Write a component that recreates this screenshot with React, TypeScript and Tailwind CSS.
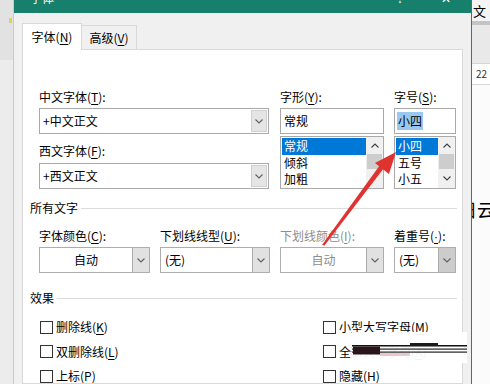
import React from "react";

const Chevron = ({ up = false, color = "#606060" }: { up?: boolean; color?: string }) => (
  <svg width="8" height="5" viewBox="0 0 8 5" className="block">
    <path d={up ? "M0.5 4.5 L4 1 L7.5 4.5" : "M0.5 0.5 L4 4 L7.5 0.5"} fill="none" stroke={color} strokeWidth="1.1" />
  </svg>
);

const Key = ({ k }: { k: string }) => (
  <>
    (<span className="underline underline-offset-[2px]">{k}</span>)
  </>
);

const Label = ({ text, k, colon = true, disabled = false }: { text: string; k: React.ReactNode; colon?: boolean; disabled?: boolean }) => (
  <div className={`h-4 leading-4 text-[12px] whitespace-nowrap ${disabled ? "text-[#8d8d8d]" : "text-black"}`}>
    {text}
    (<span className="underline underline-offset-[2px]">{k}</span>)
    {colon ? ":" : ""}
  </div>
);

const InputCombo = ({ value }: { value: string }) => (
  <div className="h-[26px] w-full border border-[#a9a9a9] bg-white flex items-center">
    <div className="flex-1 pl-[3px] text-[12px] leading-4 text-black">{value}</div>
    <div className="w-[16px] h-[22px] mr-[1px] bg-[#e5e5e5] border border-[#d0d0d0] flex items-center justify-center">
      <Chevron />
    </div>
  </div>
);

const Combo = ({ value, center = false, disabled = false, dark = false }: { value: string; center?: boolean; disabled?: boolean; dark?: boolean }) => (
  <div className="h-[26px] w-full border border-[#adadad] bg-white flex items-stretch">
    <div
      className={`flex-1 flex items-center text-[12px] leading-4 ${center ? "justify-center" : "pl-[4px]"} ${
        disabled ? "text-[#8d8d8d]" : "text-black"
      }`}
    >
      {value}
    </div>
    <div className={`w-[17px] border-l border-[#adadad] flex items-center justify-center ${dark ? "bg-[#cccccc]" : "bg-[#e1e1e1]"}`}>
      <Chevron />
    </div>
  </div>
);

const ListBox = ({ items, down = false }: { items: string[]; down?: boolean }) => (
  <div className="h-[53px] w-full border border-[#a9a9a9] bg-white flex">
    <div className="flex-1 pt-[1px] pl-[1px]">
      {items.map((it, i) => (
        <div
          key={i}
          className={`h-[16.5px] leading-[16px] text-[12px] pl-[2px] ${i === 0 ? "bg-[#0078d7] text-white" : "text-black"}`}
        >
          {it}
        </div>
      ))}
    </div>
    <div className="w-[17px] bg-[#f0f0f0] flex flex-col items-center">
      <div className="h-[17px] flex items-center justify-center">
        <Chevron up color="#404040" />
      </div>
      <div className="w-[15px] h-[15px] bg-[#cdcdcd]" />
      <div className="flex-1 flex items-center justify-center">{down ? <Chevron color="#404040" /> : null}</div>
    </div>
  </div>
);

const Check = ({ text, k }: { text: string; k: string }) => (
  <div className="flex items-center h-full">
    <div className="w-[13px] h-[13px] border border-[#333333] bg-white shrink-0" />
    <div className="ml-[3px] text-[12px] leading-4 text-black whitespace-nowrap">
      {text}
      <Key k={k} />
    </div>
  </div>
);

const GroupHeader = ({ text }: { text: string }) => (
  <div className="flex items-center h-4 pl-[7px] pr-[5px]">
    <div className="text-[12px] leading-4 text-black whitespace-nowrap">{text}</div>
    <div className="flex-1 h-px bg-[#dcdcdc] ml-[3px]" />
  </div>
);

export default function App() {
  return (
    <div className="relative w-[490px] h-[384px] overflow-hidden flex bg-white font-['Noto_Sans_CJK_SC','Microsoft_YaHei',sans-serif]">
      {/* left strip */}
      <div className="w-[14px] shrink-0 h-full flex flex-col bg-[#ececec] border-r border-[#c9c9c9]">
        <div className="h-[60px] shrink-0 bg-[#e2e2e2] flex flex-col items-end">
          <div className="mt-[18px] mr-[1px] w-[3px] h-[5px] bg-[#d8d060]" />
        </div>
      </div>

      {/* dialog */}
      <div className="w-[458px] shrink-0 h-full flex flex-col bg-[#f0f0f0] border-r border-[#2f7f70] overflow-hidden">
        <div className="h-[13px] shrink-0 bg-[#17806d] flex items-start overflow-hidden text-white text-[12px]">
          <div className="ml-[16px] -mt-[10px] leading-4">字体</div>
          <div className="flex-1" />
          <div className="-mt-[10px] mr-[38px] leading-4">?</div>
          <div className="-mt-[10px] mr-[20px] leading-4">✕</div>
        </div>

        <div className="flex-1 min-h-0 flex flex-col pl-[8px] pr-[8px] pt-[10px]">
          {/* tabs */}
          <div className="h-[26px] shrink-0 flex items-end">
            <div className="relative z-10 h-[27px] -mb-px w-[60px] bg-white border border-b-0 border-[#d9d9d9] flex items-center justify-center text-[12px] text-black leading-4">
              字体<Key k="N" />
            </div>
            <div className="h-[24px] w-[55px] bg-[#f0f0f0] border border-l-0 border-b-0 border-[#d9d9d9] flex items-center justify-center text-[12px] text-black leading-4">
              高级<Key k="V" />
            </div>
          </div>

          {/* panel */}
          <div className="flex-1 min-h-0 overflow-hidden bg-white border border-[#d9d9d9] flex flex-col pt-[39px]">
            {/* top section */}
            <div className="flex shrink-0 pl-[16px]">
              <div className="w-[230px] flex flex-col">
                <Label text="中文字体" k="T" />
                <div className="mt-[3px]">
                  <InputCombo value="+中文正文" />
                </div>
                <div className="mt-[9px]">
                  <Label text="西文字体" k="F" />
                </div>
                <div className="mt-[4px]">
                  <InputCombo value="+西文正文" />
                </div>
              </div>
              <div className="w-[104px] ml-[11px] flex flex-col">
                <Label text="字形" k="Y" />
                <div className="mt-[3px] h-[26px] border border-[#a9a9a9] bg-white flex items-center pl-[3px] text-[12px] leading-4 text-black">
                  常规
                </div>
                <div className="mt-[2px]">
                  <ListBox items={["常规", "倾斜", "加粗"]} />
                </div>
              </div>
              <div className="w-[62px] ml-[10px] flex flex-col">
                <Label text="字号" k="S" />
                <div className="mt-[3px] h-[26px] border border-[#a9a9a9] bg-white flex items-center pl-[2px] text-[12px] leading-4 text-black">
                  <span className="bg-[#99c9ef] px-[1px] leading-[18px]">小四</span>
                </div>
                <div className="mt-[2px]">
                  <ListBox items={["小四", "五号", "小五"]} down />
                </div>
              </div>
            </div>

            {/* all text */}
            <div className="mt-[11px] shrink-0">
              <GroupHeader text="所有文字" />
            </div>
            <div className="mt-[12px] shrink-0 flex pl-[16px]">
              <div className="w-[111px]">
                <Label text="字体颜色" k="C" />
                <div className="mt-[3px]">
                  <Combo value="自动" center />
                </div>
              </div>
              <div className="w-[110px] ml-[10px]">
                <Label text="下划线线型" k="U" />
                <div className="mt-[3px]">
                  <Combo value="(无)" />
                </div>
              </div>
              <div className="w-[104px] ml-[10px]">
                <Label text="下划线颜色" k="I" disabled />
                <div className="mt-[3px]">
                  <Combo value="自动" center disabled />
                </div>
              </div>
              <div className="w-[62px] ml-[10px]">
                <Label text="着重号" k={<span className="font-['Liberation_Sans',sans-serif]">·</span>} />
                <div className="mt-[3px]">
                  <Combo value="(无)" dark />
                </div>
              </div>
            </div>

            {/* effects */}
            <div className="mt-[17px] shrink-0">
              <GroupHeader text="效果" />
            </div>
            <div className="mt-[9px] shrink-0 flex pl-[17px]">
              <div className="w-[283px] flex flex-col">
                <div className="h-[24px]"><Check text="删除线" k="K" /></div>
                <div className="h-[25px]"><Check text="双删除线" k="L" /></div>
                <div className="h-[24px]"><Check text="上标" k="P" /></div>
              </div>
              <div className="flex flex-col">
                <div className="h-[24px]"><Check text="小型大写字母" k="M" /></div>
                <div className="h-[25px]"><Check text="全部大写字母" k="A" /></div>
                <div className="h-[24px]"><Check text="隐藏" k="H" /></div>
              </div>
            </div>
          </div>
        </div>
      </div>

      {/* right strip */}
      <div className="flex-1 min-w-0 overflow-hidden h-full flex flex-col bg-[#fbfbfb]">
        <div className="h-[21px] shrink-0 bg-[#f4f4f4] text-[13px] leading-4 pt-[3px] pl-[1px] text-black">文</div>
        <div className="h-[4px] shrink-0 bg-[#c4c4c4]" />
        <div className="h-[38px] shrink-0 bg-[#e9e9e9]" />
        <div className="h-[22px] shrink-0 bg-white border-y border-[#d6d6d6] text-[10px] leading-[20px] pl-[4px] text-[#333]">22</div>
        <div className="h-[114px] shrink-0" />
        <div className="text-[18px] leading-[20px] text-black whitespace-nowrap -ml-[13px]">日云</div>
      </div>

      {/* redaction overlay */}
      <div className="absolute left-[352px] top-[332px] w-[115px] h-[31px] bg-white/95">
        <svg width="115" height="31" viewBox="0 0 115 31" className="block">
          <rect x="0" y="13" width="115" height="1.5" fill="#111" />
          <rect x="0" y="16.5" width="115" height="1.2" fill="#222" />
          <rect x="0" y="19.5" width="115" height="1.2" fill="#222" />
          <rect x="1" y="14.5" width="27" height="8" fill="#2a1618" />
          <rect x="58" y="11" width="28" height="3" fill="#1a1a1a" />
          <rect x="28" y="21" width="30" height="3" fill="#e8c8cc" />
        </svg>
      </div>

      {/* red arrow */}
      <svg className="absolute left-0 top-0 pointer-events-none" width="490" height="384" viewBox="0 0 490 384">
        <polygon points="322,245 324.5,245.5 384,168 380,165" fill="#e0322f" />
        <polygon points="396,152 375,163 389,174" fill="#e0322f" />
      </svg>
    </div>
  );
}
